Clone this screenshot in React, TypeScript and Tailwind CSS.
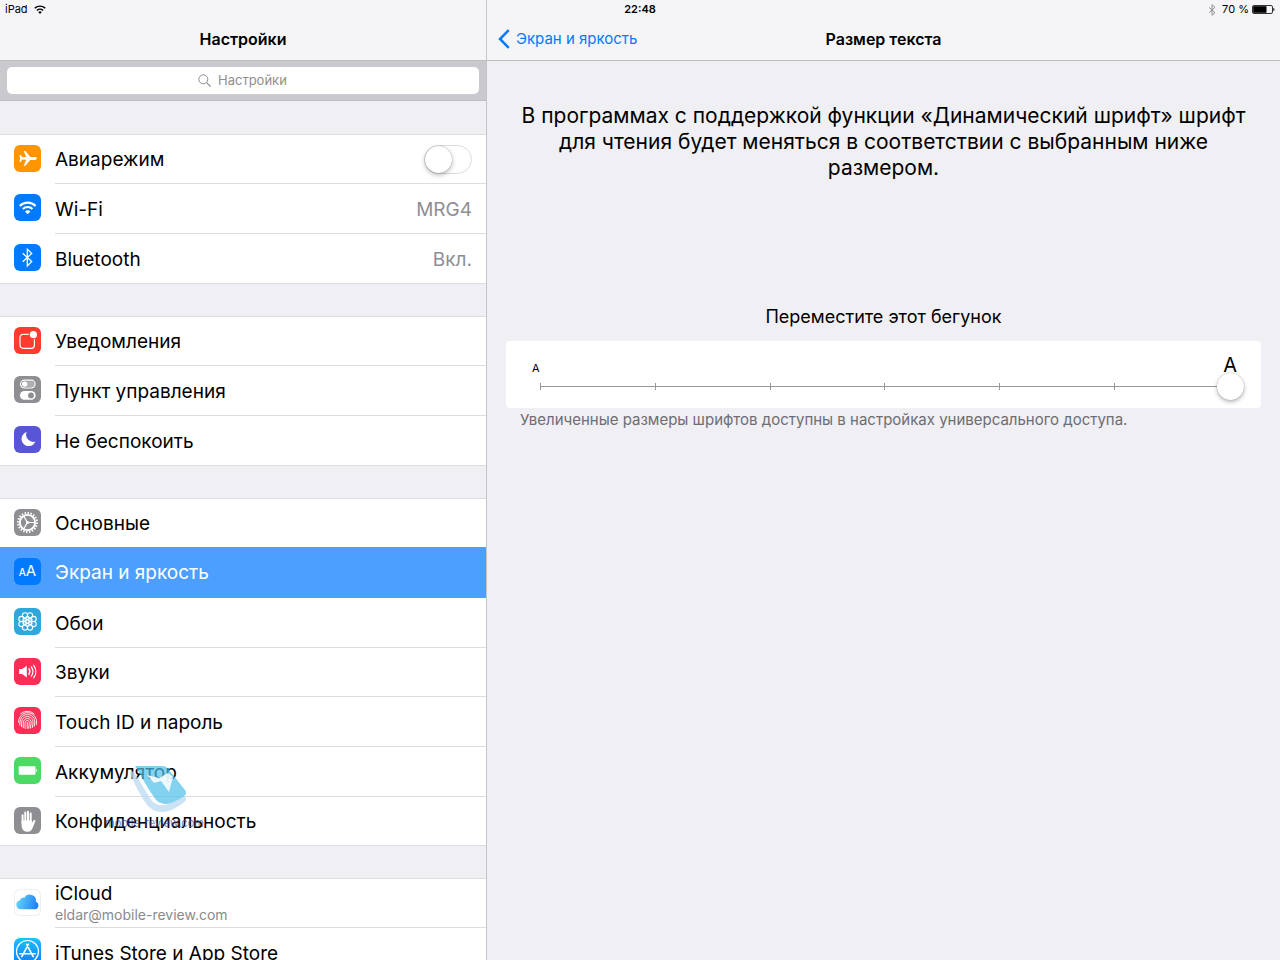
import type { ReactNode } from 'react';

type Item = {
  label: string;
  icon: ReactNode;
  tile: string;
  value?: string;
  note?: string;
  toggle?: boolean;
  selected?: boolean;
};

function Glyph({ children }: { children: ReactNode }) {
  return (
    <svg viewBox="0 0 27 27" className="size-[27px]" fill="none" aria-hidden="true">
      {children}
    </svg>
  );
}

const ring = (count: number, radius: number, offset = 0) =>
  Array.from({ length: count }, (_, i) => {
    const a = ((i + offset) / count) * Math.PI * 2;
    return { x: 13.5 + Math.cos(a) * radius, y: 13.5 + Math.sin(a) * radius };
  });

const Plane = () => (
  <Glyph>
    <path
      fill="#fff"
      d="M22.8 13.4c0-.8-1-1.4-2.3-1.4h-4.2L11.4 6H9.7l2.5 6-3.8.2-1.8-2.3H5.4l.8 3.5-.8 3.5h1.2l1.8-2.3 3.8.2-2.5 6h1.7l4.9-5.8h4.2c1.3 0 2.3-.6 2.3-1.4z"
    />
  </Glyph>
);

const Wifi = () => (
  <Glyph>
    <g stroke="#fff" strokeWidth="2.1">
      <path d="M5.8 12a11 11 0 0 1 15.8 0" />
      <path d="M8.9 15a6.7 6.7 0 0 1 9.6 0" />
    </g>
    <path fill="#fff" d="M13.7 20.3l-2.7-2.7a3.8 3.8 0 0 1 5.4 0z" />
  </Glyph>
);

const Bluetooth = () => (
  <Glyph>
    <path d="M8.7 9.3l9 8.3-4.4 4.3V5.2l4.4 4.2-9 8.3" stroke="#fff" strokeWidth="1.3" />
  </Glyph>
);

const Notices = () => (
  <Glyph>
    <rect x="6" y="7.3" width="14.4" height="14" rx="3" stroke="#fff" strokeWidth="1.2" />
    <circle cx="19.4" cy="7.7" r="4.2" fill="#fff" stroke="#ff3b30" strokeWidth="1.2" />
  </Glyph>
);

const Toggles = () => (
  <Glyph>
    <rect x="6.5" y="4.2" width="14.6" height="7.8" rx="3.9" stroke="#fff" strokeWidth="1.2" />
    <path d="M10.5 5.2h7a2.9 2.9 0 0 1 0 5.8h-7z" fill="#fff" opacity=".3" />
    <circle cx="10.6" cy="8.1" r="2.7" fill="#fff" />
    <rect x="6" y="15" width="15.6" height="8.8" rx="4.4" fill="#fff" />
    <circle cx="17" cy="19.4" r="2.9" fill="#8e8e93" />
  </Glyph>
);

const Moon = () => (
  <Glyph>
    <path fill="#fff" d="M12.6 6a7.2 7.2 0 1 0 8.8 9.6A7.3 7.3 0 0 1 12.6 6z" />
  </Glyph>
);

const Gear = () => (
  <Glyph>
    <g stroke="#fff">
      <circle cx="13.5" cy="13.5" r="7.6" strokeWidth="1.9" />
      <circle cx="13.5" cy="13.5" r="9.4" strokeWidth="2.2" pathLength="40" strokeDasharray="1 1" />
      <path d="M13.5 13.5h7.6M13.5 13.5l-4-6.6M13.5 13.5l-4 6.6" strokeWidth="1.2" />
    </g>
    <circle cx="13.5" cy="13.5" r="1.5" fill="#fff" />
  </Glyph>
);

const Letters = () => (
  <span className="flex size-[27px] items-baseline justify-center leading-[25px] text-white" aria-hidden="true">
    <span className="text-[10px] font-medium">A</span>
    <span className="text-[15px]">A</span>
  </span>
);

const Flower = () => (
  <Glyph>
    <g stroke="#fff" strokeWidth="1.1">
      {ring(8, 6.6, 0.5).map((p, i) => (
        <circle key={`outer-${i}`} cx={p.x} cy={p.y} r="2.6" />
      ))}
      {ring(6, 3.4, 0.5).map((p, i) => (
        <circle key={`inner-${i}`} cx={p.x} cy={p.y} r="1.6" />
      ))}
      <circle cx="13.5" cy="13.5" r="1.6" />
    </g>
  </Glyph>
);

const Speaker = () => (
  <Glyph>
    <path fill="#fff" d="M5.2 11.1h3l4.6-3.3v11.6l-4.6-3.3h-3z" />
    <g stroke="#fff" strokeWidth="1.3" strokeLinecap="round">
      <path d="M14.9 10.7a4.8 4.8 0 0 1 0 5.7" />
      <path d="M17.3 9a7.6 7.6 0 0 1 0 9.1" />
      <path d="M19.7 7.3a10.5 10.5 0 0 1 0 12.5" />
    </g>
  </Glyph>
);

const Finger = () => (
  <Glyph>
    <g stroke="#fff" strokeWidth=".9" strokeLinecap="round">
      <path d="M6.5 6.9a9.8 9.8 0 0 1 13.6 0" />
      <path d="M4.6 15.4a9 9 0 0 1 17.6-3.3c.6 2 .5 3.8.1 5.6" />
      <path d="M5.8 18.2c-.2-6.5 2.4-10.6 7.6-10.6 4.8 0 7.6 3.6 7.4 8.4l-.6 3.3" />
      <path d="M7.5 19.6c-.3-6 1-10 5.9-10 3.9 0 5.8 3 5.6 6.6l-.7 4.3" />
      <path d="M9.3 20.7c-.4-5.5.3-9.2 4.1-9.2 2.8 0 3.9 2.2 3.7 4.9l-.7 4.7" />
      <path d="M11.1 21.3c-.3-4.5-.1-7.9 2.3-7.9 1.7 0 2 1.5 1.9 3.2l-.6 4.7" />
      <path d="M13.3 15.4l-.1 6" />
    </g>
  </Glyph>
);

const Battery = () => (
  <Glyph>
    <rect x="4.7" y="9.2" width="16.8" height="8.6" rx=".8" fill="#fff" />
    <path fill="#fff" d="M22.3 11.8c1.2.3 1.2 3.1 0 3.4z" />
  </Glyph>
);

const Hand = () => (
  <Glyph>
    <g stroke="#fff" strokeWidth="2" strokeLinecap="round">
      <path d="M8.6 8.2v8M11.3 5.5v9M14 4.8v9M16.7 6.5v9" />
    </g>
    <path
      fill="#fff"
      d="M7.6 13.4h10.1v2.8l2.1-3c.5-.7 1.9-.2 1.5.9-1 2.6-1.8 5.3-3.2 7.8-1.3 2.3-2.8 2.8-4.9 2.8-4 0-5.6-3-5.6-7z"
    />
  </Glyph>
);

const Cloud = () => (
  <Glyph>
    <defs>
      <linearGradient id="cloud" x1="3" y1="12" x2="24" y2="18" gradientUnits="userSpaceOnUse">
        <stop stopColor="#63d0fb" />
        <stop offset="1" stopColor="#1b7df3" />
      </linearGradient>
    </defs>
    <path
      fill="url(#cloud)"
      d="M7 20.3a4.6 4.6 0 0 1-1-9.1 3.4 3.4 0 0 1 4.4-2.5 6.2 6.2 0 0 1 11.5 4.1 3.9 3.9 0 0 1-.9 7.5z"
    />
  </Glyph>
);

const Store = () => (
  <Glyph>
    <circle cx="13.5" cy="13.5" r="11" stroke="#fff" strokeWidth="1.2" />
    <g stroke="#fff" strokeWidth="1.6" strokeLinecap="round">
      <path d="M12.6 6.3l6.6 12.3M14.4 6.3L7.8 18.6M5.8 15.7h15.4" />
    </g>
  </Glyph>
);

const groups: Item[][] = [
  [
    { label: 'Авиарежим', icon: <Plane />, tile: 'bg-[#ff9500]', toggle: true },
    { label: 'Wi-Fi', icon: <Wifi />, tile: 'bg-[#007aff]', value: 'MRG4' },
    { label: 'Bluetooth', icon: <Bluetooth />, tile: 'bg-[#007aff]', value: 'Вкл.' },
  ],
  [
    { label: 'Уведомления', icon: <Notices />, tile: 'bg-[#ff3b30]' },
    { label: 'Пункт управления', icon: <Toggles />, tile: 'bg-[#8e8e93]' },
    { label: 'Не беспокоить', icon: <Moon />, tile: 'bg-[#5856d6]' },
  ],
  [
    { label: 'Основные', icon: <Gear />, tile: 'bg-[#8e8e93]' },
    { label: 'Экран и яркость', icon: <Letters />, tile: 'bg-[#007aff]', selected: true },
    { label: 'Обои', icon: <Flower />, tile: 'bg-[#2ea8dc]' },
    { label: 'Звуки', icon: <Speaker />, tile: 'bg-[#ff2d55]' },
    { label: 'Touch ID и пароль', icon: <Finger />, tile: 'bg-[#ff2d55]' },
    { label: 'Аккумулятор', icon: <Battery />, tile: 'bg-[#4cd964]' },
    { label: 'Конфиденциальность', icon: <Hand />, tile: 'bg-[#8e8e93]' },
  ],
  [
    {
      label: 'iCloud',
      icon: <Cloud />,
      tile: 'bg-white ring-1 ring-inset ring-[#efeff2]',
      note: 'eldar@mobile-review.com',
    },
    { label: 'iTunes Store и App Store', icon: <Store />, tile: 'bg-linear-to-b from-[#19c3fb] to-[#1d77f2]' },
  ],
];

function RowBody({ item }: { item: Item }) {
  return (
    <>
      <span className={`mb-[4px] shrink-0 overflow-hidden rounded-[6px] ${item.tile}`}>{item.icon}</span>
      <span className={`flex flex-1 flex-col ${item.note ? 'pb-[3px]' : ''}`}>
        <span className="text-[19px] leading-[24px]">{item.label}</span>
        {item.note && <span className="text-[14px] leading-[17px] text-[#8a8a8e]">{item.note}</span>}
      </span>
      {item.value && <span className="text-[19px] leading-[24px] text-[#8e8e93]">{item.value}</span>}
    </>
  );
}

function Row({ item }: { item: Item }) {
  const base = 'flex h-full w-full items-center gap-[14px] px-[14px] pt-[1px] text-left';
  return (
    <li
      className={`relative after:absolute after:right-0 after:bottom-0 after:h-px after:bg-[#dddde0] last:after:left-0 ${
        item.selected
          ? '-mt-px h-[51px] bg-[#4c9fff] text-white after:hidden'
          : 'h-[50px] after:left-[55px] nth-[3n+1]:h-[49px]'
      }`}
    >
      {item.toggle ? (
        <label className={base}>
          <RowBody item={item} />
          <input
            type="checkbox"
            className="mb-[2px] flex h-[29px] w-[48px] appearance-none rounded-full border border-[#dcdce0] bg-white before:size-[27px] before:rounded-full before:bg-white before:shadow-[0_2px_5px_rgba(0,0,0,0.28),0_0_1px_rgba(0,0,0,0.4)] checked:justify-end checked:bg-[#4cd964]"
          />
        </label>
      ) : (
        <button type="button" className={base}>
          <RowBody item={item} />
        </button>
      )}
    </li>
  );
}

function StatusBar() {
  return (
    <div className="absolute inset-x-0 top-0 z-10 grid h-[19px] grid-cols-3 items-center px-[5px] text-[11px]">
      <span className="flex items-center gap-[6px]">
        iPad
        <svg viewBox="0 0 12 9" className="h-[9px] w-[12px]" fill="none" aria-hidden="true">
          <path d="M.7 3.3a7.6 7.6 0 0 1 10.6 0M2.9 5.4a4.5 4.5 0 0 1 6.2 0" stroke="#000" strokeWidth="1.4" />
          <path d="M6 9L4.2 7.1a2.6 2.6 0 0 1 3.6 0z" fill="#000" />
        </svg>
      </span>
      <span className="text-center font-semibold">22:48</span>
      <span className="flex items-center justify-end gap-[3px]">
        <svg viewBox="0 0 8 12" className="mr-[3px] h-[12px] w-[8px]" fill="none" aria-hidden="true">
          <path d="M1 3.3l6 5.4-3 2.6V.7l3 2.6-6 5.4" stroke="#8e8e93" strokeWidth="1" />
        </svg>
        70 %
        <svg viewBox="0 0 23 9" className="h-[9px] w-[23px]" aria-hidden="true">
          <rect x=".5" y=".5" width="20" height="8" rx="1.5" fill="none" stroke="#000" strokeWidth=".8" />
          <rect x="1.2" y="1.2" width="13.3" height="6.6" fill="#000" />
          <path d="M21.3 3c1.6.3 1.6 2.7 0 3z" fill="#000" />
        </svg>
      </span>
    </div>
  );
}

function Watermark() {
  return (
    <div className="pointer-events-none absolute top-[764px] left-[105px] flex flex-col items-center" aria-hidden="true">
      <svg viewBox="0 0 60 50" className="ml-[10px] h-[50px] w-[60px]">
        <path
          d="M1 9C2 6 5 7 7 11l12 20c4 8 9 11 17 10 8-2 14-6 20-9 2 3 1 5-2 7-7 5-14 9-20 9-9 1-15-5-20-13C9 26 4 18 1 9z"
          fill="#b9daf1"
          opacity=".75"
        />
        <path
          d="M6 2h26c5 0 7 2 9 5l15 19c2 3 1 5-2 7-5 3-10 6-16 7-6 0-10-2-13-7C17 22 13 13 6 2z"
          fill="#4fc0ea"
          opacity=".7"
        />
        <path d="M18 11l7 8 7-2 8 11 4-15-5-4-9 5z" fill="#fff" opacity=".85" />
      </svg>
      <span className="text-[11px] leading-[18px] text-[#3f51a3] opacity-70">mobile-review.com</span>
    </div>
  );
}

function Sidebar() {
  return (
    <aside className="relative flex w-[487px] shrink-0 flex-col border-r border-[#c4c4c9]">
      <header className="flex h-[60px] shrink-0 items-end justify-center bg-[#f5f5f7] pb-[9px]">
        <h1 className="text-[16px] leading-[24px] font-semibold">Настройки</h1>
      </header>
      <div className="border-y border-[#bdbdc2] bg-[#c9c9ce] px-[7px] py-[6px]">
        <label className="flex h-[27px] items-center justify-center gap-[7px] rounded-[5px] bg-white">
          <svg viewBox="0 0 13 13" className="size-[13px]" fill="none" stroke="#8e8e93" aria-hidden="true">
            <circle cx="5.3" cy="5.3" r="4.5" />
            <path d="M8.6 8.6l3.9 3.9" strokeWidth="1.2" />
          </svg>
          <input
            type="text"
            aria-label="Поиск"
            placeholder="Настройки"
            className="w-[70px] bg-transparent text-[13px] outline-none placeholder:text-[#8e8e93]"
          />
        </label>
      </div>
      <nav className="flex flex-1 flex-col gap-[33px] overflow-y-auto pt-[34px] [scrollbar-width:none]">
        {groups.map((items) => (
          <ul key={items[0].label} className="shrink-0 bg-white shadow-[0_-1px_0_#dddde0]">
            {items.map((item) => (
              <Row key={item.label} item={item} />
            ))}
          </ul>
        ))}
      </nav>
      <Watermark />
    </aside>
  );
}

function SizeSlider() {
  return (
    <div className="rounded-[4px] bg-white pt-[14px] pr-[17px] pb-[8px] pl-[20px]">
      <div className="flex h-[18px] items-center justify-between px-[6px]">
        <span className="pt-[8px] text-[11px]">A</span>
        <span className="mr-[1px] pt-[2px] text-[20px]">A</span>
      </div>
      <div className="grid h-[27px] items-center">
        <div className="relative mx-[14px] flex items-center justify-between [grid-area:1/1] before:absolute before:inset-x-0 before:h-px before:bg-[#999]">
          {[0, 1, 2, 3, 4, 5, 6].map((n) => (
            <span key={n} className="h-[7px] w-px bg-[#999]" />
          ))}
        </div>
        <input
          type="range"
          min={0}
          max={6}
          defaultValue={6}
          aria-label="Размер текста"
          className="relative h-[27px] w-full appearance-none bg-transparent [grid-area:1/1] [&::-webkit-slider-thumb]:size-[27px] [&::-webkit-slider-thumb]:appearance-none [&::-webkit-slider-thumb]:rounded-full [&::-webkit-slider-thumb]:bg-white [&::-webkit-slider-thumb]:shadow-[0_2px_4px_rgba(0,0,0,0.28),0_0_1px_rgba(0,0,0,0.4)]"
        />
      </div>
    </div>
  );
}

function Detail() {
  return (
    <main className="flex min-w-0 flex-1 flex-col">
      <header className="grid h-[61px] grid-cols-[1fr_auto_1fr] items-end border-b border-[#bdbdc2] bg-[#f5f5f7] px-[11px] pb-[9px] leading-[24px]">
        <a href="#display" className="flex items-center gap-[6px] text-[15px] text-[#007aff]">
          <svg viewBox="0 0 12 20" className="h-[20px] w-[12px]" fill="none" aria-hidden="true">
            <path d="M10.7 1.2L2 10l8.7 8.8" stroke="#007aff" strokeWidth="2.5" />
          </svg>
          Экран и яркость
        </a>
        <h2 className="text-[16px] font-semibold">Размер текста</h2>
      </header>
      <section className="flex flex-col px-[19px] pt-[42px]">
        <p className="px-[12px] text-center text-[21px] leading-[26px]">
          В программах с поддержкой функции «Динамический шрифт» шрифт для чтения будет меняться в соответствии с
          выбранным ниже размером.
        </p>
        <h3 className="mt-[124px] mb-[12px] text-center text-[18px] leading-[24px]">Переместите этот бегунок</h3>
        <SizeSlider />
        <p className="pt-[2px] pl-[14px] text-[15px] leading-[20px] text-[#6d6d72]">
          Увеличенные размеры шрифтов доступны в настройках универсального доступа.
        </p>
      </section>
    </main>
  );
}

export default function App() {
  return (
    <div className="relative flex h-screen overflow-hidden bg-[#efeff4] font-['Inter','Liberation_Sans',sans-serif] text-black">
      <StatusBar />
      <Sidebar />
      <Detail />
    </div>
  );
}
